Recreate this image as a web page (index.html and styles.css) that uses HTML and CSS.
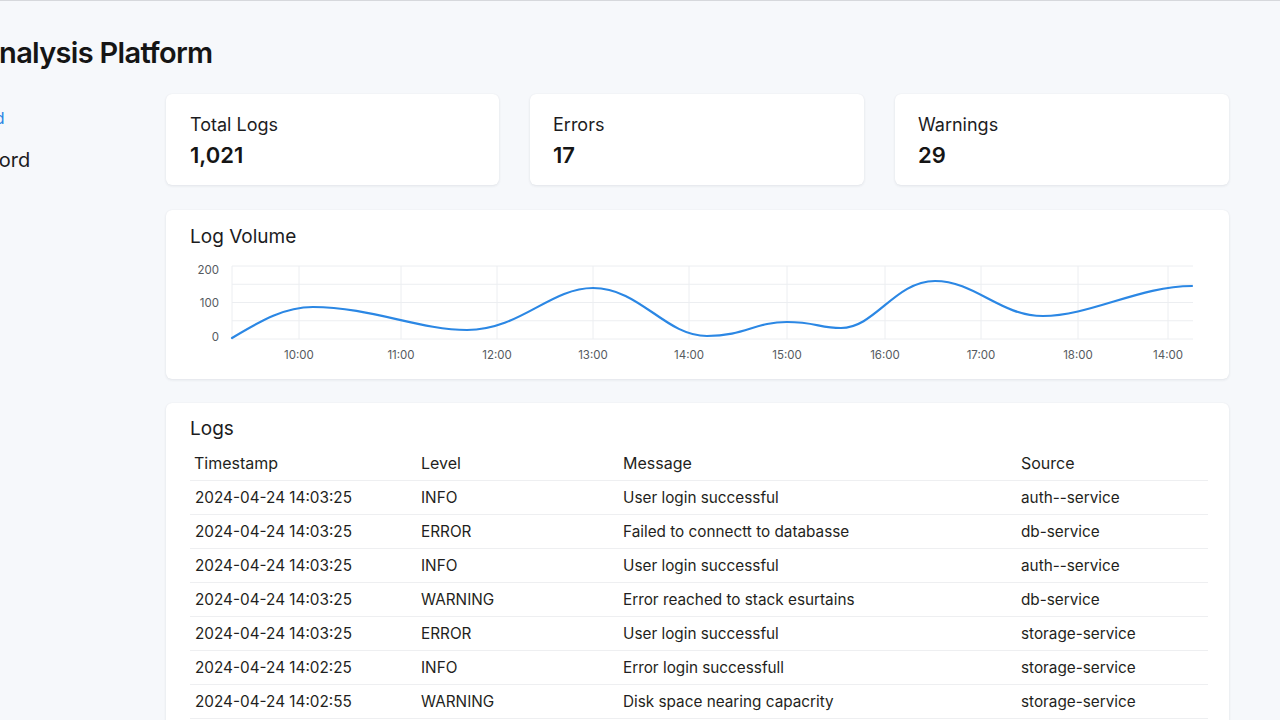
FILE: index.html
```html
<!DOCTYPE html>
<html lang="en">
<head>
<meta charset="utf-8">
<title>Log Analysis Platform</title>
<link rel="stylesheet" href="styles.css">
</head>
<body>
<div class="shell">
  <header class="topbar">
    <h1 class="app-title">Log Analysis Platform</h1>
  </header>
  <div class="body-row">
    <nav class="sidebar">
      <a class="nav-link active" href="#">Dashboard</a>
      <a class="nav-link" href="#">Log Record</a>
    </nav>
    <main class="main">
      <section class="stats">
        <div class="card stat">
          <div class="stat-label">Total Logs</div>
          <div class="stat-value">1,021</div>
        </div>
        <div class="card stat">
          <div class="stat-label">Errors</div>
          <div class="stat-value">17</div>
        </div>
        <div class="card stat">
          <div class="stat-label">Warnings</div>
          <div class="stat-value">29</div>
        </div>
      </section>

      <section class="card chart-card">
        <h2 class="card-title">Log Volume</h2>
        <svg class="chart" width="1015" height="110" viewBox="0 0 1015 110">
          <g transform="translate(-190,-258)">
            <g class="grid">
              <line x1="232" y1="266" x2="1193" y2="266"/>
              <line x1="232" y1="284.25" x2="1193" y2="284.25"/>
              <line x1="232" y1="302.5" x2="1193" y2="302.5"/>
              <line x1="232" y1="320.75" x2="1193" y2="320.75"/>
              <line x1="232" y1="339" x2="1193" y2="339"/>
              <line x1="232" y1="266" x2="232" y2="339"/>
              <line x1="299" y1="266" x2="299" y2="339"/>
              <line x1="401" y1="266" x2="401" y2="339"/>
              <line x1="497" y1="266" x2="497" y2="339"/>
              <line x1="593" y1="266" x2="593" y2="339"/>
              <line x1="689" y1="266" x2="689" y2="339"/>
              <line x1="787" y1="266" x2="787" y2="339"/>
              <line x1="885" y1="266" x2="885" y2="339"/>
              <line x1="981" y1="266" x2="981" y2="339"/>
              <line x1="1078" y1="266" x2="1078" y2="339"/>
              <line x1="1168" y1="266" x2="1168" y2="339"/>
            </g>
            <g class="ylabels">
              <text x="219" y="274">200</text>
              <text x="219" y="307">100</text>
              <text x="219" y="341">0</text>
            </g>
            <g class="xlabels">
              <text x="299" y="359">10:00</text>
              <text x="401" y="359">11:00</text>
              <text x="497" y="359">12:00</text>
              <text x="593" y="359">13:00</text>
              <text x="689" y="359">14:00</text>
              <text x="787" y="359">15:00</text>
              <text x="885" y="359">16:00</text>
              <text x="981" y="359">17:00</text>
              <text x="1078" y="359">18:00</text>
              <text x="1168" y="359">14:00</text>
            </g>
            <path class="series" d="M232,338 C262,320 285,307 313,307 C370,307 420,330 467,330 C520,330 550,288 593,288 C640,288 665,336 707,336 C745,336 755,322 787,322 C815,322 820,328 841,328 C875,328 895,281 935,281 C975,281 1000,316 1043,316 C1090,316 1140,286 1192,286"/>
          </g>
        </svg>
      </section>

      <section class="card logs-card">
        <h2 class="card-title">Logs</h2>
        <table class="log-table">
          <colgroup>
            <col class="c-ts"><col class="c-lv"><col class="c-msg"><col class="c-src">
          </colgroup>
          <thead>
            <tr><th>Timestamp</th><th>Level</th><th>Message</th><th>Source</th></tr>
          </thead>
          <tbody>
            <tr><td>2024-04-24 14:03:25</td><td>INFO</td><td>User login successful</td><td>auth--service</td></tr>
            <tr><td>2024-04-24 14:03:25</td><td>ERROR</td><td>Failed to connectt to databasse</td><td>db-service</td></tr>
            <tr><td>2024-04-24 14:03:25</td><td>INFO</td><td>User login successful</td><td>auth--service</td></tr>
            <tr><td>2024-04-24 14:03:25</td><td>WARNING</td><td>Error reached to stack esurtains</td><td>db-service</td></tr>
            <tr><td>2024-04-24 14:03:25</td><td>ERROR</td><td>User login successful</td><td>storage-service</td></tr>
            <tr><td>2024-04-24 14:02:25</td><td>INFO</td><td>Error login successfull</td><td>storage-service</td></tr>
            <tr><td>2024-04-24 14:02:55</td><td>WARNING</td><td>Disk space nearing capacrity</td><td>storage-service</td></tr>
            <tr><td>2024-04-24 14:02:10</td><td>INFO</td><td>User logout successful</td><td>auth--service</td></tr>
          </tbody>
        </table>
      </section>
    </main>
  </div>
</div>
</body>
</html>
```
FILE: styles.css
```css
html, body {
  margin: 0;
  padding: 0;
  height: 100%;
  overflow: hidden;
}
body {
  background: #f6f8fb;
  border-top: 1px solid #d6d8dc;
  box-sizing: border-box;
  font-family: Inter, "Noto Sans", sans-serif;
  color: #1c1c1e;
}
.shell {
  margin-left: -88px;
  width: 1368px;
}
.topbar {
  padding: 35px 0 0 0;
  height: 58px;
}
.app-title {
  margin: 0 0 0 10px;
  font-size: 29px;
  line-height: 34px;
  font-weight: 600;
  color: #151515;
  letter-spacing: -0.7px;
}
.body-row {
  display: flex;
}
.sidebar {
  width: 254px;
  flex: none;
  display: flex;
  flex-direction: column;
  padding: 12px 0 0 10px;
  box-sizing: border-box;
  gap: 18px;
}
.nav-link {
  text-decoration: none;
  color: #1c1c1e;
  font-size: 20px;
  line-height: 24px;
}
.nav-link.active {
  color: #2b86e3;
  font-size: 16px;
}
.main {
  width: 1063px;
  flex: none;
  display: flex;
  flex-direction: column;
  gap: 25px;
}
.card {
  background: #ffffff;
  border-radius: 6px;
  box-shadow: 0 1px 3px rgba(20, 30, 50, 0.09), 0 0 1px rgba(20, 30, 50, 0.06);
}
.stats {
  display: grid;
  grid-template-columns: 333px 334px 334px;
  column-gap: 31px;
}
.stat {
  height: 91px;
  box-sizing: border-box;
  padding: 19px 23px 0 24px;
  display: flex;
  flex-direction: column;
  gap: 4px;
}
.stat + .stat {
  padding-left: 23px;
}
.stat-label {
  font-size: 18px;
  line-height: 24px;
  color: #1c1c1e;
}
.stat-value {
  font-size: 22px;
  line-height: 28px;
  font-weight: 600;
  color: #151515;
}
.card-title {
  margin: 0;
  font-size: 19px;
  line-height: 24px;
  font-weight: 400;
  color: #1c1c1e;
}
.chart-card {
  height: 169px;
  box-sizing: border-box;
  padding: 15px 24px 0;
  display: flex;
  flex-direction: column;
  gap: 9px;
}
.chart {
  display: block;
}
.grid line {
  stroke: #eceef1;
  stroke-width: 1;
}
.ylabels text {
  font-family: Inter, "Noto Sans", sans-serif;
  font-size: 11.5px;
  fill: #555a60;
  text-anchor: end;
}
.xlabels text {
  font-family: Inter, "Noto Sans", sans-serif;
  font-size: 11.5px;
  fill: #555a60;
  text-anchor: middle;
}
.series {
  fill: none;
  stroke: #2b87e4;
  stroke-width: 2.2;
  stroke-linecap: round;
}
.logs-card {
  padding: 14px 21px 0 24px;
  margin-top: -1px;
}
.log-table {
  width: 1018px;
  table-layout: fixed;
  border-collapse: collapse;
  margin-top: 5px;
  font-size: 15.3px;
}
.log-table th,
.log-table td {
  text-align: left;
  font-weight: 400;
  padding: 0 0 0 5px;
  height: 33px;
  line-height: 20px;
  color: #1f1f21;
  border-bottom: 1px solid #eeeff1;
  white-space: nowrap;
}
.log-table th {
  font-size: 16px;
  height: 34px;
}
.log-table th:first-child {
  padding-left: 4px;
}
.c-ts { width: 226px; }
.c-lv { width: 202px; }
.c-msg { width: 398px; }
.c-src { width: 192px; }
```
